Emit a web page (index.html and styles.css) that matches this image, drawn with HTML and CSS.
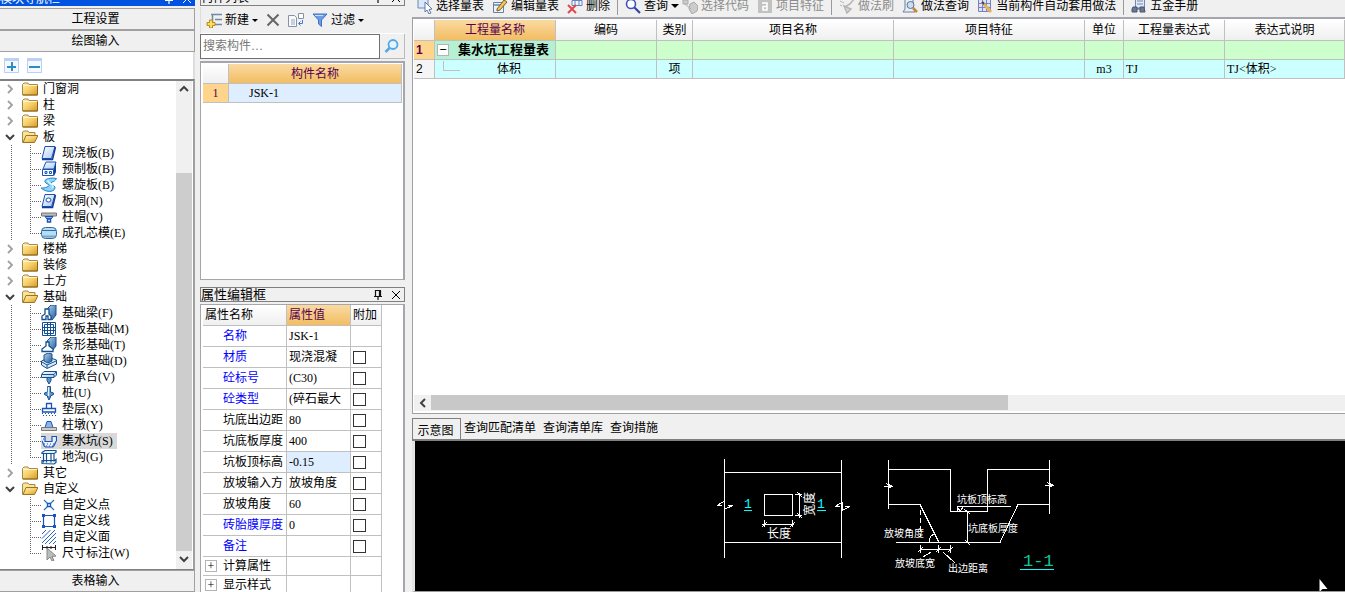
FILE: index.html
```html
<!DOCTYPE html>
<html lang="zh-CN">
<head>
<meta charset="utf-8">
<title>集水坑 - 构件定义</title>
<link rel="stylesheet" href="styles.css">
</head>
<body>
<svg class="defs" aria-hidden="true">
  <defs>
    <linearGradient id="gold" x1="0" y1="0" x2="1" y2="1"><stop offset="0" stop-color="#fff0b8"/><stop offset=".5" stop-color="#f6cf6a"/><stop offset="1" stop-color="#d99a1c"/></linearGradient>
    <linearGradient id="ice" x1="0" y1="0" x2="1" y2="1"><stop offset="0" stop-color="#fff"/><stop offset="1" stop-color="#a9c8f5"/></linearGradient>
    <linearGradient id="steel" x1="0" y1="0" x2="1" y2="1"><stop offset="0" stop-color="#b9d6f0"/><stop offset="1" stop-color="#1d5a9e"/></linearGradient>
    <symbol id="folder" viewBox="0 0 16 16"><path d="M.5 3.500 2 2h4l1 1.500H15.500v10.500H.5z" fill="url(#gold)" stroke="#a98a45"/><path d="M1 4.500H15" stroke="#fff3cc"/><path d="M15.500 5v9H1" fill="none" stroke="#8a641c"/></symbol>
    <symbol id="open" viewBox="0 0 16 16"><path d="M.5 13.500V3L2 2h4l1 1.500h6V6" fill="#f9e39b" stroke="#a98a45"/><path d="M1 13.500 4 6.500H16L12.500 13.500z" fill="url(#gold)" stroke="#9a7426"/></symbol>
    <symbol id="right" viewBox="0 0 8 10"><path d="M2 1l4 4-4 4" fill="none" stroke="#a0a0a0" stroke-width="1.800"/></symbol>
    <symbol id="down" viewBox="0 0 10 8"><path d="M1 2l4 4 4-4" fill="none" stroke="#404040" stroke-width="2"/></symbol>
    <symbol id="slab" viewBox="0 0 16 16"><path d="M4 1.500H14L10.500 13.500H1z" fill="url(#ice)" stroke="#1953b5"/><path d="M14.500 2 11.500 14.500H1" fill="none" stroke="#123f94" stroke-width="1.500"/></symbol>
    <symbol id="precast" viewBox="0 0 16 16"><path d="M5 1h10l-2 7H2z" fill="url(#ice)" stroke="#1953b5"/><path d="M15 1v10l-2 4V8z" fill="#123f94"/><path d="M1.500 8.500h11v6h-11z" fill="#fff" stroke="#1953b5"/><path d="M4 10.500h2v2H4zm4.500 0h2v2h-2z" fill="none" stroke="#1953b5"/></symbol>
    <symbol id="spiral" viewBox="0 0 16 16"><path d="M15.500 1.500C8 0 1 3 5 6c3 2 5 2 1 4-2 1-4 1-6 1 4 4 13 5 14 0 .5-3-7-4-3-6 2-.5 3-1 4.500-3.500z" fill="#8fd4f7" stroke="#2282c9"/><path d="M7 3c-1 4 8 4 4 8" fill="none" stroke="#d8f4ff" stroke-width="1.500"/></symbol>
    <symbol id="hole" viewBox="0 0 16 16"><path d="M4 1.500H14L10.500 13.500H1z" fill="url(#ice)" stroke="#1953b5"/><path d="M14.500 2 11.500 14.500H1" fill="none" stroke="#123f94" stroke-width="1.500"/><ellipse cx="7.500" cy="7" rx="2.500" ry="2" fill="#fff" stroke="#1953b5"/></symbol>
    <symbol id="cap" viewBox="0 0 16 16"><path d="M.5 4h15v3H.5z" fill="#bbb" stroke="#777"/><path d="M4 7.500h8L10 10H6z" fill="#7db1ee" stroke="#1953b5"/><path d="M6.500 10h3v3h-3z" fill="#fff" stroke="#1953b5" stroke-width="1.500"/></symbol>
    <symbol id="core" viewBox="0 0 16 16"><rect x=".5" y="2.500" width="15" height="11" rx="4" fill="#b7dcf4" stroke="#286aa6"/><path d="M1 5.500h14" stroke="#2d6ca8"/><path d="M2 11.500h12" stroke="#74a9c9" stroke-width="2"/></symbol>
    <symbol id="fbeam" viewBox="0 0 16 16"><path d="M6 4l4-4h5v10l-4 5z" fill="url(#steel)" stroke="#1c4f8b"/><path d="M1 14.500V11l3-2V4h4v5l2 2v3.500H7V11H5v3.500z" fill="#fff" stroke="#15508f" stroke-width="1.300"/></symbol>
    <symbol id="raft" viewBox="0 0 16 16"><path d="M1.500 1.500h13v13h-13zM3.500 3.500h9v9h-9zM6.500 1v14M9.500 1v14M1 6.500h14M1 9.500h14" fill="none" stroke="#15508f"/></symbol>
    <symbol id="strip" viewBox="0 0 16 16"><path d="M6 4l4-4h5v9l-4 5z" fill="url(#steel)" stroke="#1c4f8b"/><path d="M1 14.500V12l4-3V5h3v4l4 3v2.500z" fill="#fff" stroke="#15508f" stroke-width="1.300"/></symbol>
    <symbol id="single" viewBox="0 0 16 16"><path d="M.5 8 8 4.500 15.500 7v4L6 15.500.5 12z" fill="#dbeaf7" stroke="#15508f"/><path d="M3 2l4-2 4 1v7l-4 2-4-2z" fill="url(#steel)" stroke="#15508f"/><path d="M1 9l5 3 9-4M6 12v3" fill="none" stroke="#15508f"/></symbol>
    <symbol id="pilecap" viewBox="0 0 16 16"><path d="M.5 5.500 3 2.500h12.500V6L13 8.500H.5z" fill="url(#ice)" stroke="#15508f"/><path d="M1 5.500h12L15 3M13 6v2" fill="none" stroke="#15508f"/><path d="M6 8.500h4v3L8 15l-2-3.500z" fill="#5c94cf" stroke="#15508f"/></symbol>
    <symbol id="pile" viewBox="0 0 16 16"><path d="M6.500 1.500h3V7l3 1v1.500L9.500 11v1L8 15l-1.500-3v-1l-3-1.500V8l3-1z" fill="#5c94cf" stroke="#15508f"/><path d="M7.500 2v9" stroke="#e7f2fc" stroke-width="1.500"/></symbol>
    <symbol id="cushion" viewBox="0 0 16 16"><path d="M5.500 7.500v-5h5v5M1.500 11V7.500h13V11z" fill="#fff" stroke="#1953b5" stroke-width="1.300"/><path d="M1 12.500h14M2 14.500h13" stroke="#1953b5" stroke-dasharray="1 2"/></symbol>
    <symbol id="pier" viewBox="0 0 16 16"><path d="M6 4.500h4l2 6H4z" fill="#8ab6ee" stroke="#1953b5"/><path d="M.5 10.500h15v3H.5z" fill="#ccc" stroke="#777"/></symbol>
    <symbol id="sump" viewBox="0 0 16 16"><path d="M0 3.500h4v5h7v-5h4.500V8C14 8 14 14 11 14H5C2 14 2 8 1 8" fill="#eaf2ff" stroke="#1953b5" stroke-width="1.200"/><path d="M2 6h1M3 11h11M5 13h7" stroke="#1953b5" stroke-dasharray="1 2"/></symbol>
    <symbol id="trench" viewBox="0 0 16 16"><path d="M1 3.500 4 1.500h11v2l-2 1H1zM2.500 4.500v9M5.500 4.500v9M10 4.500v9M13 4.500v8M1 14.500v-3h13l1-1v3l-2 1.500z" fill="#e6f1fc" stroke="#15508f" stroke-width="1.200"/></symbol>
    <symbol id="cpoint" viewBox="0 0 16 16"><path d="M3 3l10 10M13 3 3 13" stroke="#2a75b8" stroke-width="1.200"/><path d="M6.500 6.500h3v3h-3z" fill="#fff" stroke="#0e57c8" stroke-width="1.300"/></symbol>
    <symbol id="cline" viewBox="0 0 16 16"><path d="M2.500 2.500h11v11h-11z" fill="#fff" stroke="#1953b5" stroke-width="1.200"/><path d="M1 1h3v3H1zm11 0h3v3h-3zM1 12h3v3H1zm11 0h3v3h-3z" fill="#1953c5"/></symbol>
    <symbol id="carea" viewBox="0 0 16 16"><path d="M1 5l4-4M1 9.500 9.500 1M1 14 14 1M4 15 15 4M8 15l7-7M12 15l3-3" stroke="#2a66c4"/></symbol>
    <symbol id="dim" viewBox="0 0 16 16"><path d="M1.500 0v5M14.500 0v5M6 1v3M10 1v3M1 2.500h14" stroke="#222"/><path d="M6 3l9 8-4 .5 2 4-2 .5-2-4-3 3z" fill="#bbb" stroke="#888"/></symbol>
    <symbol id="new" viewBox="0 0 16 16"><path d="M5 2.500h11M9 7.500h7M9 12.500h7M6.500 3v9" stroke="#7289a8" stroke-width="1.500" fill="none"/><path d="M3.500 8h3v2.500H9v3H6.500V16h-3v-2.500H1v-3h2.500z" fill="#f9dc68" stroke="#b98b18"/></symbol>
    <symbol id="copy" viewBox="0 0 16 16"><path d="M.5 3.500h6l2 2v9h-8z" fill="#f7f9fc" stroke="#8792a8"/><path d="M3 8h4M3 10h4M3 12h4" stroke="#9aa6bd"/><path d="M10.500 1.500h5v5h-5z" fill="#fff" stroke="#8792a8"/><path d="M14.500 8v3.500H11M12.500 9.500l-2 2 2 2" fill="none" stroke="#4b77ce"/></symbol>
    <symbol id="filter" viewBox="0 0 16 16"><path d="M1 2h14L9.500 8v6.500L6.500 12V8z" fill="#6d9be6" stroke="#4170c5"/><path d="M3 3.500h8" stroke="#c9defc"/></symbol>
    <symbol id="lens" viewBox="0 0 16 16"><circle cx="9" cy="6.500" r="4.500" fill="#e4f4ff" stroke="#55a8e2" stroke-width="1.800"/><path d="M5.500 10 1.500 14" stroke="#55a8e2" stroke-width="2.500"/></symbol>
    <symbol id="pin" viewBox="0 0 10 10"><path d="M2.500 6V.5h5V6M1 6.500h8M5 7v3M6.500 1v5" fill="none" stroke="#111" stroke-width="1.200"/></symbol>
    <symbol id="close" viewBox="0 0 10 10"><path d="M1 1l8 8M9 1 1 9" stroke="currentColor"/></symbol>
    <symbol id="pick" viewBox="0 0 16 16"><path d="M1 0h10v10H1z" fill="#dbe8fa" stroke="#6c88b5"/><path d="M8 4l7 7-3 .5 2 3.500-2 1-2-4-2 2z" fill="#fff" stroke="#5f7aa8"/></symbol>
    <symbol id="edit" viewBox="0 0 16 16"><path d="M1.500 4.500h10v10h-10z" fill="#eef3fb" stroke="#6c7f9e"/><path d="M2 7h9" stroke="#7f9fd5" stroke-width="2"/><path d="M5 11 12 2l3 2-7 8-3 1z" fill="#efc458" stroke="#7e6020"/></symbol>
    <symbol id="del" viewBox="0 0 16 16"><path d="M5 2.500h10v5H5zM8 2v5M12 2v5" fill="#edf4ff" stroke="#6484b7"/><path d="M1 7l8 8M9 7l-8 8" stroke="#e1484a" stroke-width="2"/></symbol>
    <symbol id="find" viewBox="0 0 16 16"><circle cx="6" cy="6" r="4.500" fill="#fff" stroke="#3c53b8" stroke-width="1.600"/><path d="M9.500 9.500 15 15" stroke="#3345a5" stroke-width="2.200"/></symbol>
    <symbol id="code" viewBox="0 0 16 16"><path d="M1 2h5v4H1zM8 6l4-2 4 4-1 5-5 3-3-5z" fill="#ccc" stroke="#aaa"/><path d="M3 6l6 5" stroke="#aaa"/></symbol>
    <symbol id="feat" viewBox="0 0 16 16"><path d="M1 1h14v14H1z" fill="#c2c2c2"/><path d="M5 5h5v7H6V8.500h4" fill="none" stroke="#fff" stroke-width="1.600"/></symbol>
    <symbol id="brush" viewBox="0 0 16 16"><path d="M6 9l5-3 4-5M5 8l7 3-4 4z" fill="#d5d5d5" stroke="#b5b5b5" stroke-width="1.500"/><path d="M1 3l4 2M3 8 1 7" stroke="#b5b5b5"/></symbol>
    <symbol id="query" viewBox="0 0 16 16"><path d="M3 1h8v8l2 5H1l2-3z" fill="#e9eef6" stroke="#6d7f99"/><circle cx="8.500" cy="7" r="3.500" fill="#c8def7" stroke="#63738e"/><path d="M11 10l4 4" stroke="#c3893b" stroke-width="2.500"/></symbol>
    <symbol id="auto" viewBox="0 0 16 16"><path d="M1.500 1.500h12v12h-12zM5.500 1v12M9.500 1v12M1 5.500h13M1 9.500h13" fill="#dde2fb" stroke="#7581c3"/><path d="M5 4l9 10" stroke="#e6b257" stroke-width="3"/><path d="M5 4l2 2" stroke="#343e86" stroke-width="2"/></symbol>
    <symbol id="book" viewBox="0 0 16 16"><path d="M4.500 0h9v10h-9z" fill="#e1e9f8" stroke="#7488ac"/><path d="M6 3h6M6 6h6" stroke="#7488ac"/><path d="M2 9h4v5H1v-3zm7 0h4l1 5H9zM6 11h3" fill="#697993" stroke="#465770"/></symbol>
  </defs>
</svg>

<main class="app">
  <nav class="nav" aria-label="模块导航栏">
    <header class="caption caption-blue"><span>模块导航栏</span><span class="caption-tools"><svg class="s10"><use href="#pin"/></svg><svg class="s10"><use href="#close"/></svg></span></header>
    <button class="section">工程设置</button>
    <button class="section">绘图输入</button>
    <div class="expand"><button class="mini plus" aria-label="展开"></button><button class="mini" aria-label="折叠"></button></div>
    <div class="treebox">
      <ul class="tree">
        <li class="row"><svg class="chev"><use href="#right"/></svg><svg class="i"><use href="#folder"/></svg>门窗洞</li>
        <li class="row"><svg class="chev"><use href="#right"/></svg><svg class="i"><use href="#folder"/></svg>柱</li>
        <li class="row"><svg class="chev"><use href="#right"/></svg><svg class="i"><use href="#folder"/></svg>梁</li>
        <li><div class="row"><svg class="chev"><use href="#down"/></svg><svg class="i"><use href="#open"/></svg>板</div>
          <ul class="kids railed">
            <li><i></i><svg class="i"><use href="#slab"/></svg><span>现浇板(B)</span></li>
            <li><i></i><svg class="i"><use href="#precast"/></svg><span>预制板(B)</span></li>
            <li><i></i><svg class="i"><use href="#spiral"/></svg><span>螺旋板(B)</span></li>
            <li><i></i><svg class="i"><use href="#hole"/></svg><span>板洞(N)</span></li>
            <li><i></i><svg class="i"><use href="#cap"/></svg><span>柱帽(V)</span></li>
            <li><i></i><svg class="i"><use href="#core"/></svg><span>成孔芯模(E)</span></li>
          </ul></li>
        <li class="row"><svg class="chev"><use href="#right"/></svg><svg class="i"><use href="#folder"/></svg>楼梯</li>
        <li class="row"><svg class="chev"><use href="#right"/></svg><svg class="i"><use href="#folder"/></svg>装修</li>
        <li class="row"><svg class="chev"><use href="#right"/></svg><svg class="i"><use href="#folder"/></svg>土方</li>
        <li><div class="row"><svg class="chev"><use href="#down"/></svg><svg class="i"><use href="#open"/></svg>基础</div>
          <ul class="kids railed">
            <li><i></i><svg class="i"><use href="#fbeam"/></svg><span>基础梁(F)</span></li>
            <li><i></i><svg class="i"><use href="#raft"/></svg><span>筏板基础(M)</span></li>
            <li><i></i><svg class="i"><use href="#strip"/></svg><span>条形基础(T)</span></li>
            <li><i></i><svg class="i"><use href="#single"/></svg><span>独立基础(D)</span></li>
            <li><i></i><svg class="i"><use href="#pilecap"/></svg><span>桩承台(V)</span></li>
            <li><i></i><svg class="i"><use href="#pile"/></svg><span>桩(U)</span></li>
            <li><i></i><svg class="i"><use href="#cushion"/></svg><span>垫层(X)</span></li>
            <li><i></i><svg class="i"><use href="#pier"/></svg><span>柱墩(Y)</span></li>
            <li class="picked"><i></i><svg class="i"><use href="#sump"/></svg><span>集水坑(S)</span></li>
            <li><i></i><svg class="i"><use href="#trench"/></svg><span>地沟(G)</span></li>
          </ul></li>
        <li class="row"><svg class="chev"><use href="#right"/></svg><svg class="i"><use href="#folder"/></svg>其它</li>
        <li><div class="row"><svg class="chev"><use href="#down"/></svg><svg class="i"><use href="#open"/></svg>自定义</div>
          <ul class="kids">
            <li><i></i><svg class="i"><use href="#cpoint"/></svg><span>自定义点</span></li>
            <li><i></i><svg class="i"><use href="#cline"/></svg><span>自定义线</span></li>
            <li><i></i><svg class="i"><use href="#carea"/></svg><span>自定义面</span></li>
            <li><i></i><svg class="i"><use href="#dim"/></svg><span>尺寸标注(W)</span></li>
          </ul></li>
      </ul>
      <div class="vscroll"><svg class="arrow up"><use href="#down"/></svg><div class="track"></div><div class="thumb"></div><svg class="arrow"><use href="#down"/></svg></div>
    </div>
    <button class="section">表格输入</button>
  </nav>

  <section class="mid">
    <header class="caption caption-box"><span>构件列表</span><span class="caption-tools"><svg class="s10"><use href="#pin"/></svg><svg class="s10"><use href="#close"/></svg></span></header>
    <div class="bar">
      <button class="tool"><svg class="i"><use href="#new"/></svg>新建<b class="caret"></b></button>
      <button class="tool" aria-label="删除"><svg class="cross" viewBox="0 0 14 14"><path d="M1.500 1.500 12.500 12.500M12.500 1.500 1.500 12.500" stroke="#666" stroke-width="2"/></svg></button>
      <button class="tool" aria-label="复制"><svg class="i"><use href="#copy"/></svg></button>
      <button class="tool"><svg class="i"><use href="#filter"/></svg>过滤<b class="caret"></b></button>
    </div>
    <div class="search"><input type="text" placeholder="搜索构件…" aria-label="搜索构件"><button aria-label="搜索"><svg class="i"><use href="#lens"/></svg></button></div>
    <div class="listbox">
      <table class="list">
        <colgroup><col class="w26"><col></colgroup>
        <tr><th></th><th class="hot">构件名称</th></tr>
        <tr><td class="num">1</td><td class="sel">JSK-1</td></tr>
      </table>
    </div>
    <header class="title"><span>属性编辑框</span><span class="caption-tools"><svg class="s10"><use href="#pin"/></svg><svg class="s10"><use href="#close"/></svg></span></header>
    <div class="propbox">
      <table class="props">
        <colgroup><col class="w84"><col class="w64"><col class="w31"></colgroup>
        <tr><th>属性名称</th><th class="hot">属性值</th><th>附加</th></tr>
        <tr><td class="key">名称</td><td>JSK-1</td><td></td></tr>
        <tr><td class="key">材质</td><td>现浇混凝</td><td><input type="checkbox" aria-label="材质附加"></td></tr>
        <tr><td class="key">砼标号</td><td>(C30)</td><td><input type="checkbox" aria-label="砼标号附加"></td></tr>
        <tr><td class="key">砼类型</td><td>(碎石最大</td><td><input type="checkbox" aria-label="砼类型附加"></td></tr>
        <tr><td>坑底出边距</td><td>80</td><td><input type="checkbox" aria-label="坑底出边距附加"></td></tr>
        <tr><td>坑底板厚度</td><td>400</td><td><input type="checkbox" aria-label="坑底板厚度附加"></td></tr>
        <tr><td>坑板顶标高</td><td class="sel">-0.15</td><td><input type="checkbox" aria-label="坑板顶标高附加"></td></tr>
        <tr><td>放坡输入方</td><td>放坡角度</td><td><input type="checkbox" aria-label="放坡输入方附加"></td></tr>
        <tr><td>放坡角度</td><td>60</td><td><input type="checkbox" aria-label="放坡角度附加"></td></tr>
        <tr><td class="key">砖胎膜厚度</td><td>0</td><td><input type="checkbox" aria-label="砖胎膜厚度附加"></td></tr>
        <tr><td class="key">备注</td><td></td><td><input type="checkbox" aria-label="备注附加"></td></tr>
        <tr class="group"><td><button class="box" aria-label="展开计算属性">+</button>计算属性</td><td></td><td></td></tr>
        <tr class="group"><td><button class="box" aria-label="展开显示样式">+</button>显示样式</td><td></td><td></td></tr>
      </table>
    </div>
  </section>

  <section class="main">
    <div class="toolbar">
      <button class="tool"><svg class="i"><use href="#pick"/></svg>选择量表</button>
      <button class="tool"><svg class="i"><use href="#edit"/></svg>编辑量表</button>
      <button class="tool"><svg class="i"><use href="#del"/></svg>删除</button>
      <span class="sep"></span>
      <button class="tool"><svg class="i"><use href="#find"/></svg>查询<b class="caret big"></b></button>
      <button class="tool" disabled><svg class="i"><use href="#code"/></svg>选择代码</button>
      <button class="tool" disabled><svg class="i"><use href="#feat"/></svg>项目特征</button>
      <span class="sep"></span>
      <button class="tool" disabled><svg class="i"><use href="#brush"/></svg>做法刷</button>
      <button class="tool"><svg class="i"><use href="#query"/></svg>做法查询</button>
      <button class="tool"><svg class="i"><use href="#auto"/></svg>当前构件自动套用做法</button>
      <span class="sep"></span>
      <button class="tool"><svg class="i"><use href="#book"/></svg>五金手册</button>
    </div>
    <div class="gridbox">
      <table class="grid">
        <colgroup><col class="w20"><col class="w121"><col class="w101"><col class="w36"><col class="w201"><col class="w191"><col class="w39"><col class="w101"><col></colgroup>
        <tr><th></th><th class="hot">工程量名称</th><th>编码</th><th>类别</th><th>项目名称</th><th>项目特征</th><th>单位</th><th>工程量表达式</th><th>表达式说明</th></tr>
        <tr class="green"><td class="num strong">1</td><td class="lead"><div class="node"><button class="box" aria-label="折叠">−</button>集水坑工程量表</div></td><td></td><td></td><td></td><td></td><td></td><td></td><td></td></tr>
        <tr class="cyan"><td class="num plain">2</td><td><div class="leaf"><span class="elbow"></span><span>体积</span></div></td><td></td><td class="mid-text">项</td><td></td><td></td><td class="mid-text">m3</td><td>TJ</td><td>TJ&lt;体积&gt;</td></tr>
      </table>
      <div class="hscroll"><svg class="arrow left"><use href="#down"/></svg><div class="hthumb"></div></div>
    </div>
    <div class="tabs" role="tablist">
      <button role="tab" aria-selected="true" class="active">示意图</button><button role="tab">查询匹配清单</button><button role="tab">查询清单库</button><button role="tab">查询措施</button>
    </div>
    <div class="canvas">
      <svg class="drawing" viewBox="415 441 930 150" preserveAspectRatio="xMinYMin meet">
        <g class="ln">
          <path d="M724.500 459v99M841.500 460v98M724 472.500h118M724 542.500h118M764.500 494.500h28v21h-28z"/>
          <path d="M717 505.500l7-4v8l9-4h-5M717 505.500h5M835 506.500l7-4v8l8-4h-5M835 506.500h5"/>
          <path d="M764.500 520v7M792.500 520v7M762 524.500h32M762 527l5-5M790 527l5-5M795 494.500h7M795 515.500h7M799.500 493v25M797 492l5 5M797 513l5 5"/>
          <path d="M888.500 460v49M888 469.500h62.500v42h37v-42h62M1049.500 460v54M888 504.500h32l19 38M1049 504.500h-31l-18 38M896 542.500h104"/>
          <path d="M884 486.500h9l-7-3M892 486l-4 3M1045 485.500h9l-7-3M1053 485l-4 3"/>
          <path d="M957 506.500h54M957 507l3 4 4-5M957.500 506v5M967.500 511v32M964 509l6 5M965 540l5 5"/>
          <path d="M920.500 510v26" stroke-dasharray="5 3"/>
          <path d="M929 542c0-4 2-7 6-8M920 549.500h31M920.500 545v8M938.500 545v8M950.500 545v8M918 552l5-5M936 552l5-5M948 552l5-5M931 552l-8 5M943 552l12 11"/>
        </g>
        <g class="aqua"><path d="M744 510.500h8M817 510.500h9M1020 569.500h34"/></g>
        <g class="num-label"><text x="744" y="508">1</text><text x="817" y="508">1</text><text class="cut" x="1023" y="566">1-1</text></g>
        <g class="label"><text x="767" y="538">长度</text><text transform="translate(814 516) rotate(-90)">宽度</text></g>
        <g class="label small"><text x="957" y="503">坑板顶标高</text><text x="968" y="532">坑底板厚度</text><text x="884" y="537">放坡角度</text><text x="895" y="567">放坡底宽</text><text x="948" y="572">出边距离</text></g>
        <path d="M1319.500 579v13l3-3h5z" fill="#fff"/>
      </svg>
    </div>
  </section>
</main>
</body>
</html>
```

FILE: styles.css
```css
* { box-sizing: border-box; }
body { margin: 0; background: #f0f0f0; color: #000; font: 12px/16px "Liberation Serif", "Noto Sans CJK SC", serif; overflow: hidden; }
button, input { font: inherit; color: inherit; }
button { margin: 0; padding: 0; border: 0; background: none; white-space: nowrap; }
ul { list-style: none; margin: 0; padding: 0; }
table { border-collapse: separate; border-spacing: 0; table-layout: fixed; }
.defs { position: absolute; width: 0; height: 0; }
.i { width: 16px; height: 16px; flex: none; }
.s10 { width: 10px; height: 10px; }

.app { display: flex; height: 100vh; }
.nav { width: 195px; flex: none; display: flex; flex-direction: column; }
.mid { width: 205px; flex: none; margin: 0 7px 0 5px; display: flex; flex-direction: column; }
.main { flex: 1; min-width: 0; display: flex; flex-direction: column; }

/* Panel captions */
.caption { height: 6px; flex: none; overflow: hidden; display: flex; align-items: flex-end; justify-content: space-between; line-height: 14px; margin-bottom: 1px; }
.caption-blue { background: #0053e1; color: #fff; padding-right: 3px; margin-bottom: 2px; }
.caption-box { border: 1px solid #808080; border-top: 0; padding-right: 3px; }
.caption-tools { display: flex; gap: 8px; align-items: center; padding-bottom: 2px; }
.caption-blue .s10 { filter: brightness(0) invert(1); }

/* Left navigation */
.section { height: 22px; flex: none; border: 1px solid #a0a0a0; border-left: 0; padding-right: 3px; line-height: 20px; text-align: center; background: #f0f0f0; }
.expand { height: 27px; flex: none; background: #fff; border-right: 2px solid #ddd; display: flex; gap: 8px; padding: 6px 4px; }
.mini { width: 15px; height: 15px; border: 1px solid #bccff5; border-top-width: 3px; background: linear-gradient(#2e8bc8, #2e8bc8) center / 11px 2px no-repeat #f4f8ff; }
.plus { background: linear-gradient(#2e8bc8, #2e8bc8) center / 9px 2px no-repeat, linear-gradient(#2e8bc8, #2e8bc8) center / 2px 9px no-repeat #f4f8ff; }
.treebox { flex: 1; min-height: 0; border-top: 2px solid #808080; border-right: 2px solid #a0a0a0; border-bottom: 1px solid #808080; background: #fff; display: flex; padding-right: 1px; }
.tree { flex: 1; min-width: 0; white-space: nowrap; }
.row { height: 16px; display: flex; align-items: center; padding-left: 5px; }
.row .chev { width: 10px; height: 10px; margin-right: 7px; }
.row .i { margin-right: 5px; }
.kids > li { height: 16px; display: flex; align-items: center; padding-left: 30px; }
.railed > li { background: linear-gradient(#666 50%, transparent 50%) 11px 0 / 1px 2px repeat-y; }
.kids i { width: 11px; height: 16px; background: linear-gradient(90deg, #666 50%, transparent 50%) 2px 8px / 2px 1px repeat-x; }
.kids i::before { content: ""; display: block; width: 1px; height: 16px; background: linear-gradient(#666 50%, transparent 50%) 0 0 / 1px 2px repeat-y; }
.kids > li:last-child i::before { height: 8px; }
.kids span { padding: 0 4px 0 5px; }
.picked .i, .picked span { background-color: #d9d9d9; }
.vscroll { width: 16px; background: #f0f0f0; display: flex; flex-direction: column; align-items: center; padding-bottom: 2px; }
.arrow { width: 10px; height: 16px; flex: none; }
.up { transform: rotate(180deg); }
.track { flex: 76; }
.thumb { flex: 378; width: 16px; background: #cdcdcd; }

/* Component list */
.bar { height: 27px; flex: none; display: flex; align-items: center; gap: 8px; padding: 0 5px; border-left: 1px solid #ddd; border-bottom: 1px solid #fff; }
.tool { display: flex; align-items: center; gap: 3px; }
.tool:disabled { color: #8c8c8c; }
.cross { width: 14px; height: 14px; }
.caret { border: 3px solid transparent; border-top-color: #000; border-bottom: 0; }
.caret.big { border-width: 4px 4px 0; margin-right: -5px; }
.search { height: 25px; flex: none; display: flex; align-items: center; border: 1px solid #bbb; border-width: 0 1px 1px 0; }
.search input { flex: 1; min-width: 0; height: 25px; border: 1px solid #707070; padding: 0 2px; background: #fff; }
.search input::placeholder { color: #777; opacity: 1; }
.search button { width: 24px; display: flex; justify-content: center; }
.listbox { height: 219px; flex: none; margin-top: 2px; padding: 1px 1px 1px 2px; border: 2px solid #a5a5ad; border-width: 2px 2px 1px 1px; background: #fff; }
th, td { border-right: 1px solid #c0c0c0; border-bottom: 1px solid #c0c0c0; padding: 0; font-weight: normal; overflow: hidden; white-space: nowrap; }
th { background: linear-gradient(#fff, #efefef); }
.hot { background: linear-gradient(#fadaa2, #f2bd62); color: #58004e; }
.num { background: #ffd48c; color: #58004e; text-align: center; }
.sel { background: #deeeff; }
.list { width: 100%; }
.list th { height: 20px; }
.list td { height: 19px; }
.list .sel { padding-left: 20px; }

/* Property editor */
.title { height: 15px; flex: none; margin: 7px 0 2px; border: 1px solid #808080; display: flex; align-items: center; justify-content: space-between; font-size: 13px; line-height: 13px; padding-right: 3px; }
.title .caption-tools { padding: 0; }
.propbox { flex: 1; min-height: 0; overflow: hidden; border: 2px solid #a5a5ad; border-width: 1px 2px 0 1px; background: #fff; padding: 0 1px 0 2px; }
.props { width: 179px; }
.props th { height: 21px; text-align: left; padding-left: 2px; }
.props td { height: 21px; padding-left: 2px; }
.props td:first-child { padding-left: 20px; }
.props .key { color: #00f; }
.props input { appearance: none; display: block; width: 13px; height: 13px; margin: 0; border: 1px solid #333; background: #fff; }
.props .group td { height: 19px; }
.props .group td:first-child { padding-left: 2px; }
.box { width: 12px; height: 12px; border: 1px solid #b4b4b4; background: #fff; line-height: 10px; text-align: center; color: #000; }
.props .box { margin-right: 6px; }

/* Quantity table */
.toolbar { height: 17px; flex: none; overflow: hidden; display: flex; align-items: flex-start; gap: 8px; padding-left: 5px; }
.toolbar .tool { height: 12px; }
.sep { width: 1px; height: 15px; background: #999; margin: 0 -1px; }
.gridbox { height: 397px; flex: none; border: 1px solid #a0a0a0; border-right: 0; border-top: 2px solid #a5a5ad; background: #fff; display: flex; flex-direction: column; justify-content: space-between; padding: 1px 0 2px 1px; }
.grid { width: 100%; }
.grid th { height: 21px; }
.grid td { height: 19px; padding-left: 2px; }
.grid .green { background: #cfc; }
.grid .cyan { background: #cff; }
.grid .lead { background: #b4f0d4; font-weight: bold; font-size: 13px; line-height: 16px; }
.grid .num { text-align: left; font-family: "Liberation Sans", sans-serif; }
.strong { font-weight: bold; }
.grid .plain { background: #f5f5f5; color: #000; }
.grid .mid-text { text-align: center; padding: 0; }
.node { display: flex; align-items: center; justify-content: space-between; padding-right: 6px; }
.leaf { display: grid; grid-template-columns: 23px 1fr; padding-left: 6px; }
.leaf span:last-child { padding-left: 31px; }
.elbow { width: 17px; height: 10px; border: 1px solid #c0c0c0; border-width: 0 0 1px 1px; }
.hscroll { height: 16px; background: #f0f0f0; display: flex; }
.hscroll .arrow { margin: 0 3px 0 4px; }
.left { transform: rotate(90deg); }
.hthumb { width: 62%; height: 15px; background: #c8c8c8; }

/* Diagram tabs */
.tabs { height: 27px; flex: none; display: flex; padding-top: 4px; background: #f0f0f0; border-bottom: 2px solid #808080; }
.tabs button { height: 20px; padding: 0 4px 0 3px; line-height: 16px; }
.tabs .active { height: 21px; width: 49px; border: 1px solid #808080; border-bottom: 0; padding: 3px 4px 0 2px; }
.canvas { flex: 1; min-height: 0; overflow: hidden; background: #000; border-left: 3px solid #e4e4e4; border-bottom: 1px solid #999; }
.drawing { display: block; width: 930px; height: 150px; }
.ln { fill: none; stroke: #fff; stroke-width: 1; shape-rendering: crispEdges; }
.aqua { stroke: #0ff; fill: none; }
.label text { fill: #fff; font-size: 12px; }
.small text { font-size: 10px; }
.num-label text { fill: #0ff; font: 13px "Liberation Mono", monospace; }
.num-label .cut { font-size: 17px; fill: #0fc89a; }
.w20 { width: 21px; } .w26 { width: 26px; } .w31 { width: 31px; } .w36 { width: 36px; } .w39 { width: 39px; }
.w64 { width: 64px; } .w84 { width: 84px; } .w101 { width: 101px; } .w121 { width: 121px; } .w191 { width: 191px; } .w201 { width: 201px; }
```
